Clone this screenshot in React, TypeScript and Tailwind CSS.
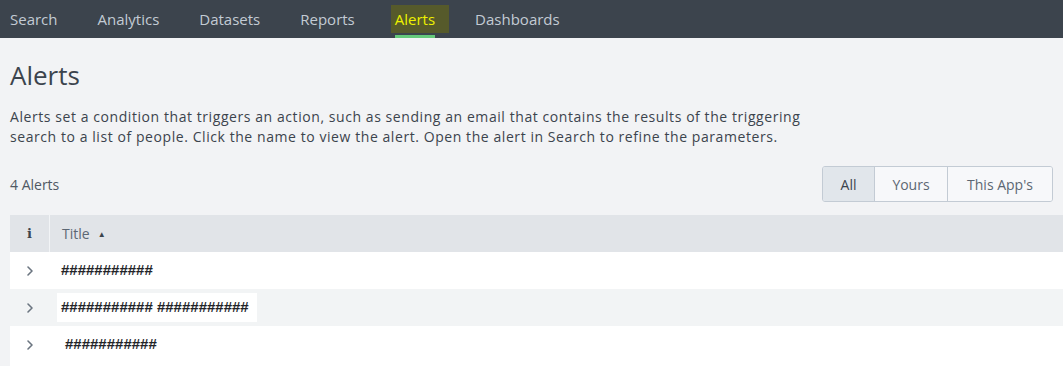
const navItems = ["Search", "Analytics", "Datasets", "Reports", "Alerts", "Dashboards"];

const rows = [
  { title: "###########", striped: false, boxed: false, indent: false },
  { title: "########### ###########", striped: true, boxed: true, indent: false },
  { title: "###########", striped: false, boxed: false, indent: true },
];

function Chevron() {
  return (
    <svg width="8" height="12" viewBox="0 0 8 12" fill="none" stroke="#6b7580" strokeWidth="1.6" strokeLinecap="round" strokeLinejoin="round">
      <polyline points="2,2 6,6 2,10" />
    </svg>
  );
}

export default function App() {
  return (
    <div className="h-[366px] w-full overflow-hidden bg-[#f2f3f5] font-['Open_Sans',sans-serif] text-[#3c444d]">
      <nav className="flex h-[38px] items-stretch bg-[#3c444d] pl-[10px] text-[15px]">
        {navItems.map((item, i) => {
          const active = item === "Alerts";
          return (
            <div key={item} className={`relative flex items-center ${i === 0 ? "pr-5" : "px-5"}`}>
              {active ? (
                <span className="-ml-[4px] -mr-[14px] bg-[#565a2b] py-[3px] pl-[4px] pr-[14px] text-[#eef200]">
                  {item}
                </span>
              ) : (
                <span className="text-[#c3cbd4]">{item}</span>
              )}
              {active && <span className="absolute bottom-0 left-5 right-5 h-[3px] bg-[#65c97a]" />}
            </div>
          );
        })}
      </nav>

      <div className="pl-[10px]">
        <h1 className="pt-[20px] text-[26px] font-medium leading-[34px] text-[#3c444d]">Alerts</h1>
        <p className="mt-[15px] text-[14px] leading-[20px] tracking-[0.57px] text-[#3c444d]">
          Alerts set a condition that triggers an action, such as sending an email that contains the results of the triggering
          <br />
          search to a list of people. Click the name to view the alert. Open the alert in Search to refine the parameters.
        </p>

        <div className="mt-[19px] flex items-center justify-between pr-[10px]">
          <span className="text-[14px] text-[#4f5863]">4 Alerts</span>
          <div className="flex h-[36px] overflow-hidden rounded-[3px] border border-[#c3cbd4] text-[14px]">
            <button className="w-[51px] bg-[#e1e6eb] text-[#3c444d]">All</button>
            <button className="w-[73px] border-l border-[#c3cbd4] bg-[#f7f8fa] text-[#5c6773]">Yours</button>
            <button className="w-[105px] border-l border-[#c3cbd4] bg-[#f7f8fa] text-[#5c6773]">This App's</button>
          </div>
        </div>

        <div className="mt-[13px]">
          <div className="flex h-[37px] items-center bg-[#e1e4e8] text-[14px]">
            <div className="flex h-full w-[40px] items-center justify-center border-r border-[#f2f4f6] font-['DejaVu_Serif',serif] text-[13px] font-bold text-[#3c444d]">
              i
            </div>
            <div className="flex items-center gap-[8px] pl-[12px] text-[#5c6773]">
              Title
              <span className="text-[8px] leading-none text-[#3c444d]">▲</span>
            </div>
          </div>

          {rows.map((row, i) => (
            <div
              key={i}
              className={`flex items-start ${i === rows.length - 1 ? "h-[42px]" : "h-[37px]"} ${
                row.striped ? "bg-[#f2f4f5]" : "bg-white"
              }`}
            >
              <div className="flex h-[37px] w-[40px] items-center justify-center">
                <Chevron />
              </div>
              <div className={`flex h-[37px] items-center ${row.indent ? "pl-[15px]" : "pl-[11px]"}`}>
                <span
                  className={`font-['Liberation_Sans',sans-serif] text-[15px] font-bold text-[#222428] ${
                    row.boxed ? "-ml-[4px] bg-white py-[3px] pl-[4px] pr-[8px]" : ""
                  }`}
                >
                  {row.title}
                </span>
              </div>
            </div>
          ))}
        </div>
      </div>
    </div>
  );
}
